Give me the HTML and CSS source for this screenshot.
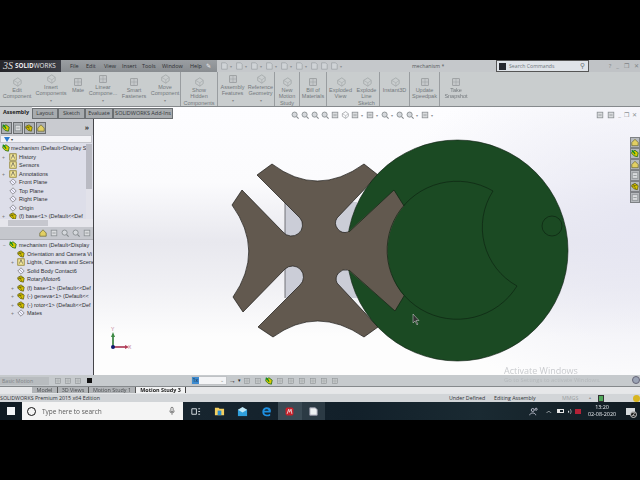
FILE: index.html
```html
<!DOCTYPE html>
<html lang="en">
<head>
<meta charset="utf-8">
<title>SOLIDWORKS</title>
<link rel="stylesheet" href="styles.css">
</head>
<body>
<svg class="defs" width="0" height="0">
  <symbol id="cube" viewBox="0 0 12 12"><path d="M2 4l5-3 4 3v4l-4 3-5-3z" fill="none" stroke="currentColor"/><path d="M2 4l5 3 4-3M7 7v4" fill="none" stroke="currentColor" stroke-width=".7"/></symbol>
  <symbol id="part" viewBox="0 0 10 10"><path d="M1 3l4-2 4 3-1 5-4-1-3-3z" fill="#d8c400" stroke="#4a4a10" stroke-width=".8"/><path d="M3 2l3 6M1 5l7-2" stroke="#4a4a10" stroke-width=".7"/></symbol>
  <symbol id="asm" viewBox="0 0 10 10"><path d="M1 3l4-2 4 3-1 5-4-1-3-3z" fill="#dcc900" stroke="#1d6d1d"/><path d="M1 1l3 3 1 2" stroke="#0f8f1f" stroke-width="1.6" fill="none"/></symbol>
  <symbol id="plane" viewBox="0 0 10 10"><path d="M1 5l4-4 4 4-4 4z" fill="#eef" stroke="#666" stroke-width=".8"/><path d="M3 3l4 4" stroke="#888" stroke-width=".7"/></symbol>
  <symbol id="folder" viewBox="0 0 10 10"><rect x="1" y="1" width="8" height="8" fill="#f5e9a0" stroke="#8a7a20"/><path d="M3 7l2-5 2 5" fill="none" stroke="#444" stroke-width=".8"/></symbol>
  <symbol id="ghost" viewBox="0 0 12 12"><rect x="2" y="2" width="8" height="8" fill="#c4c7c9" stroke="#8d9193" stroke-width=".8"/><path d="M2 6h8M6 2v8" stroke="#9a9ea0" stroke-width=".6"/></symbol>
  <symbol id="hud" viewBox="0 0 10 10"><circle cx="4.500" cy="4.500" r="3.200" fill="#d5d8dc" stroke="#7f8588"/><path d="M7 7l2.500 2.500" stroke="#7f8588" stroke-width="1.300"/></symbol>
  <symbol id="box" viewBox="0 0 10 10"><rect x="1.500" y="1.500" width="7" height="7" fill="#d9dbdd" stroke="#8b9093"/><path d="M3 5h4" stroke="#8b9093"/></symbol>
  <symbol id="tool" viewBox="0 0 10 10"><path d="M2 1h5l2 2v6H2z" fill="#cfd3d6" stroke="#a0a5a8"/></symbol>
  <symbol id="task" viewBox="0 0 10 10"><path d="M1 5l4-4 4 4v4H1z" fill="#e2cf63" stroke="#5d5a2a" stroke-width=".8"/></symbol>
</svg>

<div class="black top-black"></div>

<div class="app">
  <header class="titlebar">
    <div class="brand"><span class="ds">3S</span><span class="bold">SOLID</span><span class="thin">WORKS</span></div>
    <nav class="menu">
      <span class="m1">File</span><span class="m2">Edit</span><span class="m2">View</span><span class="m3">Insert</span><span class="m3">Tools</span><span class="m4">Window</span><span class="m5">Help</span>
      <span class="pin">✎</span>
    </nav>
    <div class="quick">
      <svg class="q"><use href="#tool"/></svg><i>▾</i><svg class="q"><use href="#tool"/></svg><i>▾</i><svg class="q"><use href="#tool"/></svg><i>▾</i><svg class="q"><use href="#tool"/></svg><i>▾</i><svg class="q"><use href="#tool"/></svg><i>▾</i><svg class="q"><use href="#tool"/></svg><i>▾</i><svg class="q"><use href="#tool"/></svg><svg class="q"><use href="#tool"/></svg><svg class="q"><use href="#tool"/></svg><i>▾</i>
    </div>
    <div class="doc">mechanism *</div>
    <div class="search"><span class="sq"></span><span class="st">Search Commands</span><span class="mag">⚲</span></div>
    <div class="winbtns"><span>?</span><span class="dash">_</span><span>❐</span><span>✕</span></div>
  </header>

  <section class="command">
    <div class="cmd w34"><svg><use href="#cube"/></svg><p>Edit<br>Component</p></div>
    <div class="cmd dd w34"><svg><use href="#cube"/></svg><p>Insert<br>Components</p><i>▾</i></div>
    <div class="cmd w20"><svg><use href="#ghost"/></svg><p>Mate</p></div>
    <div class="cmd dd w30"><svg><use href="#ghost"/></svg><p>Linear<br>Compone...</p><i>▾</i></div>
    <div class="cmd w32"><svg><use href="#ghost"/></svg><p>Smart<br>Fasteners</p></div>
    <div class="cmd dd w31 sep"><svg><use href="#cube"/></svg><p>Move<br>Component</p><i>▾</i></div>
    <div class="cmd w37 sep"><svg><use href="#cube"/></svg><p>Show<br>Hidden<br>Components</p></div>
    <div class="cmd dd w29"><svg><use href="#ghost"/></svg><p>Assembly<br>Features</p><i>▾</i></div>
    <div class="cmd dd w28 sep"><svg><use href="#cube"/></svg><p>Reference<br>Geometry</p><i>▾</i></div>
    <div class="cmd w25 sep"><svg><use href="#cube"/></svg><p>New<br>Motion<br>Study</p></div>
    <div class="cmd w27 sep"><svg><use href="#ghost"/></svg><p>Bill of<br>Materials</p></div>
    <div class="cmd w27"><svg><use href="#cube"/></svg><p>Exploded<br>View</p></div>
    <div class="cmd w26 sep"><svg><use href="#cube"/></svg><p>Explode<br>Line<br>Sketch</p></div>
    <div class="cmd w30 sep"><svg><use href="#cube"/></svg><p>Instant3D</p></div>
    <div class="cmd w30 sep"><svg><use href="#ghost"/></svg><p>Update<br>Speedpak</p></div>
    <div class="cmd w32"><svg><use href="#ghost"/></svg><p>Take<br>Snapshot</p></div>
  </section>

  <main class="work">
    <div class="tabrow">
      <div class="tab on">Assembly</div>
      <div class="tab t25">Layout</div>
      <div class="tab t27">Sketch</div>
      <div class="tab t28">Evaluate</div>
      <div class="tab t60">SOLIDWORKS Add-Ins</div>
      <div class="hud">
        <svg><use href="#hud"/></svg><svg><use href="#hud"/></svg><svg><use href="#hud"/></svg><svg><use href="#hud"/></svg><svg><use href="#box"/></svg><svg><use href="#cube"/></svg><svg><use href="#box"/></svg><i>▾</i><svg><use href="#box"/></svg><i>▾</i><svg><use href="#hud"/></svg><i>▾</i><svg><use href="#hud"/></svg><svg><use href="#hud"/></svg><i>▾</i><svg><use href="#box"/></svg><i>▾</i>
      </div>
      <div class="vpctl"><svg><use href="#box"/></svg><svg><use href="#box"/></svg><span>_</span><span>❐</span><span>✕</span></div>
    </div>

    <div class="stagebox">
      <aside class="panel">
        <div class="ptabs">
          <span class="ptab"><svg><use href="#asm"/></svg></span><span class="ptab"><svg><use href="#box"/></svg></span><span class="ptab"><svg><use href="#part"/></svg></span><span class="ptab"><svg><use href="#task"/></svg></span>
          <b class="more">»</b>
        </div>
        <div class="filter"><span class="funnel"></span><i>▾</i></div>
        <div class="treebox">
          <ul class="tree">
            <li class="root"><svg><use href="#asm"/></svg>mechanism (Default&lt;Display S</li>
            <li><b>+</b><svg><use href="#folder"/></svg>History</li>
            <li><b></b><svg><use href="#folder"/></svg>Sensors</li>
            <li><b>+</b><svg><use href="#folder"/></svg>Annotations</li>
            <li><b></b><svg><use href="#plane"/></svg>Front Plane</li>
            <li><b></b><svg><use href="#plane"/></svg>Top Plane</li>
            <li><b></b><svg><use href="#plane"/></svg>Right Plane</li>
            <li><b></b><svg><use href="#plane"/></svg>Origin</li>
            <li><b>+</b><svg><use href="#part"/></svg>(f) base&lt;1&gt; (Default&lt;&lt;Def</li>
          </ul>
          <div class="vscroll"></div>
        </div>
        <div class="hscroll"><span></span></div>
        <div class="flyout"><svg><use href="#task"/></svg><svg><use href="#box"/></svg><svg><use href="#hud"/></svg><svg><use href="#hud"/></svg><svg><use href="#box"/></svg></div>
        <ul class="tree tree2">
          <li class="root"><b>−</b><svg><use href="#asm"/></svg>mechanism (Default&lt;Display</li>
          <li class="sub"><b></b><svg><use href="#part"/></svg>Orientation and Camera Vi</li>
          <li class="sub"><b>+</b><svg><use href="#folder"/></svg>Lights, Cameras and Scene</li>
          <li class="sub"><b></b><svg><use href="#plane"/></svg>Solid Body Contact6</li>
          <li class="sub"><b></b><svg><use href="#part"/></svg>RotaryMotor6</li>
          <li class="sub"><b>+</b><svg><use href="#part"/></svg>(f) base&lt;1&gt; (Default&lt;&lt;Def</li>
          <li class="sub"><b>+</b><svg><use href="#part"/></svg>(-) geneva&lt;1&gt; (Default&lt;&lt;</li>
          <li class="sub"><b>+</b><svg><use href="#part"/></svg>(-) rotor&lt;1&gt; (Default&lt;&lt;Def</li>
          <li class="sub"><b>+</b><svg><use href="#plane"/></svg>Mates</li>
        </ul>
      </aside>

      <div class="stage">
        <svg class="model" viewBox="94 119 546 257" aria-label="Geneva mechanism">
          <rect x="285" y="202" width="72" height="96" fill="#cbcdd7"/>
          <path d="M285 202V298" stroke="#55565c" stroke-width=".8"/>
          <path class="brown" d="M257 175L272 164Q317 198 364 164L378 175L337 218A9.500 9.500 0 0 0 348 232L394 190L404 204Q372 251 404 298L395 311L348 270A9.500 9.500 0 0 0 337 283L378 327L364 337Q317 305 273 337L258 327L300 285A9.500 9.500 0 0 0 285 269L243 312L233 297Q265 251 232 205L242 190L283 232A9.500 9.500 0 0 0 300 218Z"/>
          <circle class="disk" cx="457.500" cy="250.500" r="110.500"/>
          <path class="brown noline" d="M348 232L394 190L404 206A70 70 0 0 0 404 296L395 311L348 270L338 260V242Z"/>
          <path class="edge" d="M394 190L404 206M404 296L395 311M394 190L349 232M395 311L349 270"/>
          <path class="edge" d="M493 191A70 69 0 1 0 517 286A67 67 0 0 1 493 191Z"/>
          <circle class="edge" cx="552" cy="226" r="10"/>
          <path class="triad-y" d="M113 347V336"/><path class="tip-y" d="M111 337L113 332L115 337Z"/>
          <path class="triad-x" d="M113 347H127"/><path class="tip-x" d="M125 345L129 347L125 349Z"/>
          <circle cx="113" cy="347" r="2" fill="#111a70"/>
          <text class="axis" x="111" y="331">Y</text><text class="axis" x="128" y="349">X</text>
          <path class="cursor" d="M413 314V323L415 321L417 325L418 324L416 320.500L419 320.500Z"/>
        </svg>
        <div class="panes">
          <svg><use href="#task"/></svg><svg><use href="#asm"/></svg><svg><use href="#task"/></svg><svg><use href="#box"/></svg><svg><use href="#part"/></svg><svg><use href="#box"/></svg>
        </div>
      </div>
    </div>
    <div class="activate"><p class="a1">Activate Windows</p><p class="a2">Go to Settings to activate Windows.</p></div>
  </main>

  <section class="motion">
    <div class="mselect">Basic Motion</div>
    <div class="mtools"><svg><use href="#ghost"/></svg><svg><use href="#ghost"/></svg><svg><use href="#ghost"/></svg><span class="stop"></span></div>
    <div class="speed"><span class="sel">1x</span><i>⌄</i></div>
    <div class="mtools2"><b>→</b><i>▾</i><svg><use href="#ghost"/></svg><svg><use href="#ghost"/></svg><svg><use href="#asm"/></svg><svg><use href="#ghost"/></svg><svg><use href="#ghost"/></svg><svg><use href="#ghost"/></svg><svg><use href="#ghost"/></svg><svg><use href="#ghost"/></svg><svg><use href="#ghost"/></svg></div>
    <span class="mcirc"></span>
  </section>

  <section class="studytabs">
    <span class="st w25b">Model</span><span class="st w30b">3D Views</span><span class="st w46b">Motion Study 1</span><span class="st active">Motion Study 3</span>
  </section>

  <footer class="status">
    <span class="edition">SOLIDWORKS Premium 2015 x64 Edition</span>
    <span class="under">Under Defined</span><span class="editing">Editing Assembly</span><span class="mmgs">MMGS</span><span class="caret">▴</span><span class="stat-ic"></span><span class="coin"></span>
  </footer>

  <div class="taskbar">
    <span class="start"><i></i><i></i><i></i><i></i></span>
    <div class="tsearch"><span class="ring"></span><span class="hint">Type here to search</span><svg class="mic" viewBox="0 0 8 12"><rect x="2.500" y="1" width="3" height="6" rx="1.500" fill="none" stroke="#555"/><path d="M1 5.500a3 3 0 0 0 6 0M4 9v2" fill="none" stroke="#555"/></svg></div>
    <div class="apps">
      <span class="app-i"><svg viewBox="0 0 12 12"><path d="M2 3h5v6H2zM9 3h2M9 6h2M9 9h2" fill="none" stroke="#dfe6ea"/></svg></span>
      <span class="app-i"><svg viewBox="0 0 12 12"><path d="M1 2h4l1 1h5v7H1z" fill="#f4cf5f"/><rect x="4" y="5" width="4" height="5" fill="#2c8fd1"/></svg></span>
      <span class="app-i"><svg viewBox="0 0 12 12"><path d="M1 4h10v7H1z" fill="#2f9fdc"/><path d="M1 4l5 3 5-3-5-3z" fill="#bfe7f7"/></svg></span>
      <span class="app-i"><svg viewBox="0 0 12 12"><path d="M10.500 7H3.500c.3 2.800 4 3 6.500 1.500v2c-3 1.500-8.500 1-8.500-4C1.500 1.500 6.500 0.500 9 2c2 1.200 2 3.500 1.500 5zM3.600 5.300h4.800C8.300 3 4 3 3.600 5.300z" fill="#1e8fe0"/></svg></span>
      <span class="app-i lit"><svg viewBox="0 0 14 14"><rect x="2" y="2" width="10" height="10" rx="2" fill="#c8202a"/><path d="M4 10l2-6 1 4 2-4 1 6" fill="none" stroke="#eee"/></svg></span>
      <span class="app-i lit2"><svg viewBox="0 0 12 12"><path d="M2 2h6l2 2v6H2z" fill="#eef1f3" stroke="#99a"/></svg></span>
    </div>
    <div class="tray">
      <svg class="t1" viewBox="0 0 12 12"><circle cx="5" cy="4" r="2" fill="none" stroke="#dde"/><path d="M1 11c0-4 8-4 8 0" fill="none" stroke="#dde"/><circle cx="9.500" cy="3" r="1.400" fill="none" stroke="#dde"/></svg>
      <span class="chev">︿</span>
      <span class="batt"></span>
      <span class="vol">◖)</span>
      <span class="net"></span>
      <div class="clock"><span>13:20</span><span>02-08-2020</span></div>
      <span class="note"><em>2</em></span>
    </div>
  </div>
</div>

<div class="black bottom-black"></div>
</body>
</html>
```

FILE: styles.css
```css
* { box-sizing: border-box; }
html, body { margin: 0; padding: 0; height: 480px; overflow: hidden; background: #000; }
body { font-family: "Open Sans", "Liberation Sans", sans-serif; color: #333; display: flex; flex-direction: column; }
.defs { position: absolute; }
.black { background: #000; flex: none; }
.top-black { height: 60px; }
.bottom-black { height: 60px; }
.app { height: 360px; flex: none; display: flex; flex-direction: column; filter: blur(.45px); overflow: hidden; }
i { font-style: normal; }
p { margin: 0; }
ul { list-style: none; margin: 0; padding: 0; }

/* title bar */
.titlebar { height: 12px; flex: none; display: flex; align-items: center; background: #c5c8cb; font-size: 5.500px; }
.brand { width: 61px; height: 12px; flex: none; background: linear-gradient(90deg, #26262b, #3b3d45); color: #e9e9ec; display: flex; align-items: center; padding-left: 3px; font-size: 6.300px; line-height: 12px; overflow: hidden; }
.ds { font-family: "Liberation Serif", serif; font-size: 10px; font-style: italic; margin-right: 2px; color: #ddd; }
.bold { font-weight: 700; }
.thin { font-weight: 400; }
.menu { display: flex; width: 156px; flex: none; align-items: center; color: #2e3033; padding-left: 9px; background: linear-gradient(#9a9ea2, #888c90); height: 12px; }
.menu span { flex: none; }
.m1 { width: 16px; } .m2 { width: 18px; } .m3 { width: 20px; } .m4 { width: 28px; } .m5 { width: 16px; }
.pin { font-size: 6px; line-height: 8px; color: #eee; }
.quick { display: flex; align-items: center; width: 140px; flex: none; padding-left: 3px; height: 12px; color: #8e9194; font-size: 4px; overflow: hidden; }
.q { width: 8px; height: 8px; margin-right: 2px; flex: none; }
.quick i { margin-right: 3px; }
.doc { width: 139px; flex: none; color: #55585b; padding-left: 55px; font-size: 5.200px; white-space: nowrap; line-height: 12px; }
.search { width: 93px; height: 12px; flex: none; background: #dfe3e8; border: 1px solid #555; display: flex; align-items: center; padding-left: 2px; color: #70767c; font-size: 5.200px; overflow: hidden; }
.sq { width: 7px; height: 7px; background: #25282e; margin-right: 3px; flex: none; }
.search .st { flex: 1; white-space: nowrap; }
.mag { font-size: 7px; line-height: 8px; transform: scaleX(-1); margin-right: 3px; }
.winbtns { width: 51px; height: 12px; flex: none; background: #c0c3c6; display: flex; gap: 5px; align-items: center; justify-content: flex-end; color: #7f8487; font-size: 6px; line-height: 8px; padding-right: 1px; overflow: hidden; }

/* command manager */
.command { height: 35px; flex: none; display: flex; background: #c9cdce; border-bottom: 1px solid #85898c; }
.cmd { flex: none; text-align: center; font-family: "Liberation Sans", sans-serif; font-size: 5.500px; line-height: 6.300px; color: #73787c; padding-top: 5px; display: flex; flex-direction: column; align-items: center; white-space: nowrap; }
.cmd.dd { padding-top: 2px; }
.cmd svg { width: 10px; height: 10px; color: #a4a8aa; flex: none; }
.cmd i { font-size: 3.500px; line-height: 4px; color: #888; margin-top: 2px; }
.sep { border-right: 1px solid #999da0; }
.w20 { width: 20px; } .w25 { width: 25px; } .w26 { width: 26px; } .w27 { width: 27px; } .w28 { width: 28px; } .w29 { width: 29px; }
.w30 { width: 30px; } .w31 { width: 31px; } .w32 { width: 32px; } .w34 { width: 34px; } .w37 { width: 37px; }

/* work area */
.work { height: 270px; flex: none; position: relative; display: flex; flex-direction: column;
  background:
    radial-gradient(ellipse 260px 170px at 640px 120px, #e6e6f2 0%, rgba(230,230,242,0) 100%),
    linear-gradient(#fdfdff 0, #fbfbfd 28%, #e8e8ee 50%, #f0f0f4 66%, #fdfdfd 85%); }
.tabrow { height: 12px; flex: none; display: flex; align-items: stretch; font-size: 5.500px; line-height: 9px; color: #333; }
.tab { flex: none; text-align: center; margin-top: 1px; background: #a7abae; border: 1px solid #6b6f72; color: #34373a; white-space: nowrap; }
.tab.on { width: 32px; background: #c9cccf; border: 0; font-weight: 700; color: #222; margin-top: 0; line-height: 11px; }
.t25 { width: 26px; } .t27 { width: 27px; } .t28 { width: 28px; } .t60 { width: 60px; }
.hud { display: flex; align-items: center; margin-left: 118px; gap: 2px; padding-top: 4px; color: #8f9396; font-size: 4px; }
.hud svg { width: 8px; height: 8px; flex: none; }
.hud i { margin-right: 1px; }
.vpctl { margin-left: auto; display: flex; align-items: center; gap: 3px; padding: 4px 3px 0 0; color: #8d9295; font-size: 6px; }
.vpctl svg { width: 8px; height: 8px; }

.stagebox { flex: 1; display: flex; min-height: 0; position: relative; }
.panel { width: 94px; flex: none; height: 258px; background: #dddee9; border-right: 1px solid #454549; display: flex; flex-direction: column; }
.ptabs { height: 16px; flex: none; background: #c9cbd0; display: flex; align-items: center; padding: 1px 0 0 1px; gap: 1px; }
.ptab { width: 10.500px; height: 12px; background: #aeb1b5; border: 1px solid #6a6d70; display: flex; align-items: center; justify-content: center; }
.ptab svg { width: 8px; height: 8px; }
.more { margin-left: auto; font-size: 7px; line-height: 8px; padding-right: 4px; color: #333; }
.filter { height: 8px; flex: none; background: #f2f2f6; border: 1px solid #c4c5cb; margin: 0 1px 0 0; display: flex; align-items: center; padding-left: 3px; font-size: 4px; color: #333; }
.funnel { width: 0; height: 0; border: 3px solid transparent; border-top: 5px solid #2c7bd0; border-bottom: 0; margin-right: 1px; }
.treebox { height: 76px; flex: none; display: flex; position: relative; padding-top: 1px; }
.tree { flex: 1; min-width: 0; font-family: "Liberation Sans", sans-serif; font-size: 5.500px; color: #2d2e33; white-space: nowrap; overflow: hidden; }
.tree li { height: 8.500px; line-height: 8.500px; display: flex; align-items: center; padding-left: 2px; }
.tree li b { width: 7px; flex: none; font-size: 5px; font-weight: 400; color: #777; }
.tree li svg { width: 8px; height: 8px; flex: none; margin-right: 2px; }
.tree .root svg { margin-right: 1px; }
.vscroll { width: 6px; flex: none; background: linear-gradient(#b9bac3 0 60%, #e2e2ea 60%); margin-right: 1px; }
.hscroll { height: 8px; flex: none; background: #e6e6ec; padding: 1px 0 1px 8px; }
.hscroll span { display: block; width: 40px; height: 6px; background: #c6c7ce; }
.flyout { height: 13px; flex: none; background: #c5c7cd; display: flex; align-items: center; justify-content: flex-end; gap: 3px; padding-right: 2px; border-bottom: 1px solid #aeb0b6; }
.flyout svg { width: 8px; height: 8px; }
.tree2 { padding-top: 1px; flex: 1; }
.tree2 .root { padding-left: 3px; }
.tree2 .root b { width: 6px; }
.tree2 .root svg { margin-right: 2px; }
.tree2 .sub { padding-left: 11px; }
.tree2 .sub b { width: 6px; }

.stage { flex: 1; min-width: 0; position: relative; }
.model { display: block; width: 546px; height: 257px; }
.brown { fill: #62594f; stroke: #1a1815; stroke-width: .7; }
.noline { stroke: none; }
.disk { fill: #1b4a23; stroke: #0f1d12; stroke-width: .6; }
.edge { fill: none; stroke: #0d2411; stroke-width: .7; }
.triad-y { stroke: #2d7a34; stroke-width: 1.600; }
.tip-y { fill: #3d8a44; }
.triad-x { stroke: #a8324e; stroke-width: 1.600; }
.tip-x { fill: #b43c58; }
.axis { font-size: 5px; fill: #c07a90; font-family: "Liberation Sans", sans-serif; }
.cursor { fill: #333; stroke: #fff; stroke-width: .4; }
.panes { position: absolute; right: 0; top: 18px; width: 10px; display: flex; flex-direction: column; }
.panes svg { width: 10px; height: 11px; background: #b6b9bd; border: 1px solid #7e8185; }
.activate { position: absolute; left: 504px; top: 258px; white-space: nowrap; z-index: 1; }
.a1 { font-size: 9px; line-height: 11px; color: #c9cbce; }
.a2 { font-size: 5.900px; line-height: 9px; color: #b4b8bb; }

/* motion */
.motion { height: 11px; flex: none; background: #c6cacd; display: flex; align-items: center; position: relative; margin-top: -2px; font-size: 5.200px; color: #7d8285; }
.mselect { width: 49px; height: 8px; line-height: 8px; padding-left: 2px; background: #b8bcbf; flex: none; }
.mtools { width: 142px; flex: none; display: flex; align-items: center; gap: 2px; padding-left: 5px; }
.mtools svg { width: 8px; height: 8px; }
.stop { width: 5px; height: 5px; background: #111; margin-left: 3px; }
.speed { width: 36px; height: 9px; background: #f3f4f6; flex: none; display: flex; justify-content: space-between; padding-right: 2px; color: #888; font-size: 5px; line-height: 7px; border: 1px solid #bfc2c5; }
.sel { width: 7px; background: #3d8bd0; color: #123; text-align: center; line-height: 7px; }
.mtools2 { display: flex; align-items: center; gap: 2px; padding-left: 2px; font-size: 5px; line-height: 7px; color: #222; }
.mtools2 svg { width: 8px; height: 8px; margin-right: 1px; }
.mtools2 b { font-size: 7px; line-height: 7px; }
.mcirc { position: absolute; right: 0; top: 1px; width: 8px; height: 8px; border-radius: 50%; background: #9aa3b5; border: 1px solid #667; }

.studytabs { height: 7px; flex: none; background: #e6e7e9; display: flex; padding-left: 32px; font-size: 5.400px; line-height: 6px; color: #4b4e51; border-top: 1px solid #85898c; }
.studytabs .st { flex: none; text-align: center; background: #b1b4b7; border-right: 1px solid #555; }
.w25b { width: 26px; } .w30b { width: 31px; } .w46b { width: 47px; }
.studytabs .active { width: 50px; background: #f2f3f4; color: #1a1a1a; font-weight: 700; border-right: 1px solid #444; }

.status { height: 9px; flex: none; background: #d2d5d8; display: flex; align-items: center; font-size: 5.300px; line-height: 8px; color: #303336; border-top: 1px solid #e4e6e8; position: relative; }
.edition { width: 449px; flex: none; }
.under { width: 45px; flex: none; }
.editing { width: 68px; flex: none; }
.mmgs { width: 27px; flex: none; color: #9a9ea1; }
.caret { width: 9px; flex: none; font-size: 4px; color: #8b8f92; }
.stat-ic { width: 6px; height: 7px; background: #4fa85a; border: 1px solid #333; flex: none; }
.coin { width: 7px; height: 7px; background: #d8b520; border-radius: 50%; margin-left: auto; flex: none; }

/* taskbar */
.taskbar { height: 18px; flex: none; background: linear-gradient(90deg, #0f1a22, #17252f 30%, #12202a 55%, #1a2a32 75%, #111b22); display: flex; align-items: center; color: #e6eaee; }
.start { width: 22px; height: 18px; flex: none; display: grid; grid-template-columns: 3.500px 3.500px; grid-auto-rows: 3.500px; gap: .7px; justify-content: center; align-content: center; }
.start i { background: #f2f4f6; }
.tsearch { width: 161px; height: 18px; flex: none; background: #f4f4f4; display: flex; align-items: center; padding-left: 5px; color: #5b5b5b; font-size: 6.500px; }
.ring { width: 9px; height: 9px; border: 1.500px solid #111; border-radius: 50%; margin-right: 6px; flex: none; }
.hint { flex: 1; }
.mic { width: 6px; height: 10px; margin-right: 8px; }
.apps { display: flex; margin-left: 1px; }
.app-i { width: 23.500px; height: 18px; display: flex; align-items: center; justify-content: center; flex: none; }
.app-i svg { width: 11px; height: 11px; }
.lit { background: #3a4a54; }
.lit2 { background: #2b3a44; }
.tray { margin-left: auto; display: flex; align-items: center; height: 18px; font-size: 5.500px; line-height: 8px; }
.t1 { width: 9px; height: 9px; margin-right: 8px; }
.chev { width: 11px; font-size: 6px; line-height: 6px; }
.batt { width: 7px; height: 4px; border: 1px solid #e8e8e8; background: linear-gradient(90deg, #e8e8e8 50%, transparent 50%); margin-right: 3px; }
.vol { width: 8px; font-size: 5px; }
.net { width: 6px; height: 5px; background: #b32136; margin-right: 3px; }
.clock { width: 36px; display: flex; flex-direction: column; align-items: center; font-size: 5.400px; line-height: 7px; }
.note { width: 20px; height: 18px; display: flex; align-items: center; justify-content: center; position: relative; }
.note::before { content: ""; width: 9px; height: 7px; background: #d6dadd; }
.note em { position: absolute; right: 3px; bottom: 2px; font-style: normal; font-size: 5px; color: #fff; background: #222; border: 1px solid #ccc; border-radius: 50%; width: 7px; height: 7px; line-height: 5px; text-align: center; }
```
